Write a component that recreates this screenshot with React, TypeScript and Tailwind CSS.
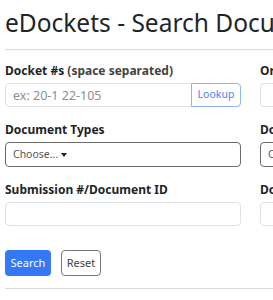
const columns = [
  [
    { label: "Docket #s", hint: "(space separated)", kind: "lookup" },
    { label: "Document Types", kind: "select" },
    { label: "Submission #/Document ID", kind: "input" },
  ],
  [
    { label: "Organization", kind: "input" },
    { label: "Document Class", kind: "select" },
    { label: "Document Date", kind: "input" },
  ],
];

function Field({ field }: { field: { label: string; hint?: string; kind: string } }) {
  return (
    <div className="flex flex-col">
      <label className="text-[12px] font-bold leading-[16px] text-[#212529] whitespace-nowrap mb-[4px]">
        {field.label}
        {field.hint && <span className="text-[#444]"> {field.hint}</span>}
      </label>
      {field.kind === "lookup" && (
        <div className="flex h-[24px]">
          <input
            placeholder="ex: 20-1 22-105"
            className="flex-1 min-w-0 h-full border border-[#dee2e6] rounded-l-[4px] px-[7px] text-[12.5px] text-[#212529] placeholder:text-[#8a8f94] outline-none"
          />
          <button className="h-full w-[50px] border border-[#8fb6f7] rounded-r-[4px] text-[10.5px] text-[#4a85f0] -ml-px">
            Lookup
          </button>
        </div>
      )}
      {field.kind === "select" && (
        <div className="h-[25px] border border-[#6c6c6c] rounded-[4px] flex items-center px-[7px] text-[10.5px] text-[#555]">
          Choose...
          <span className="ml-[3px] w-0 h-0 border-l-[3.5px] border-r-[3.5px] border-t-[4px] border-l-transparent border-r-transparent border-t-[#222]" />
        </div>
      )}
      {field.kind === "input" && (
        <input className="h-[24px] border border-[#dee2e6] rounded-[4px] outline-none" />
      )}
    </div>
  );
}

export default function App() {
  return (
    <div className="w-[273px] h-[300px] overflow-hidden bg-white font-['Noto_Sans',sans-serif] text-[#212529]">
      <div className="w-[560px] px-[5px]">
        <h1 className="text-[24.5px] leading-[28px] pt-[9px] whitespace-nowrap text-[#212529]">
          eDockets - Search Documents
        </h1>
        <hr className="mt-[12px] border-[#dcdcdc]" />
        <div className="flex gap-[19px] mt-[13px]">
          {columns.map((col, i) => (
            <div key={i} className="w-[236px] flex flex-col gap-[15px]">
              {col.map((f) => (
                <Field key={f.label} field={f} />
              ))}
            </div>
          ))}
        </div>
        <div className="flex gap-[10px] mt-[24px]">
          <button className="h-[26px] w-[46px] rounded-[4px] bg-[#3478f6] text-white text-[11px]">
            Search
          </button>
          <button className="h-[26px] w-[40px] rounded-[4px] border border-[#777] text-[#444] text-[11px]">
            Reset
          </button>
        </div>
        <hr className="mt-[12px] border-[#dcdcdc]" />
      </div>
    </div>
  );
}
